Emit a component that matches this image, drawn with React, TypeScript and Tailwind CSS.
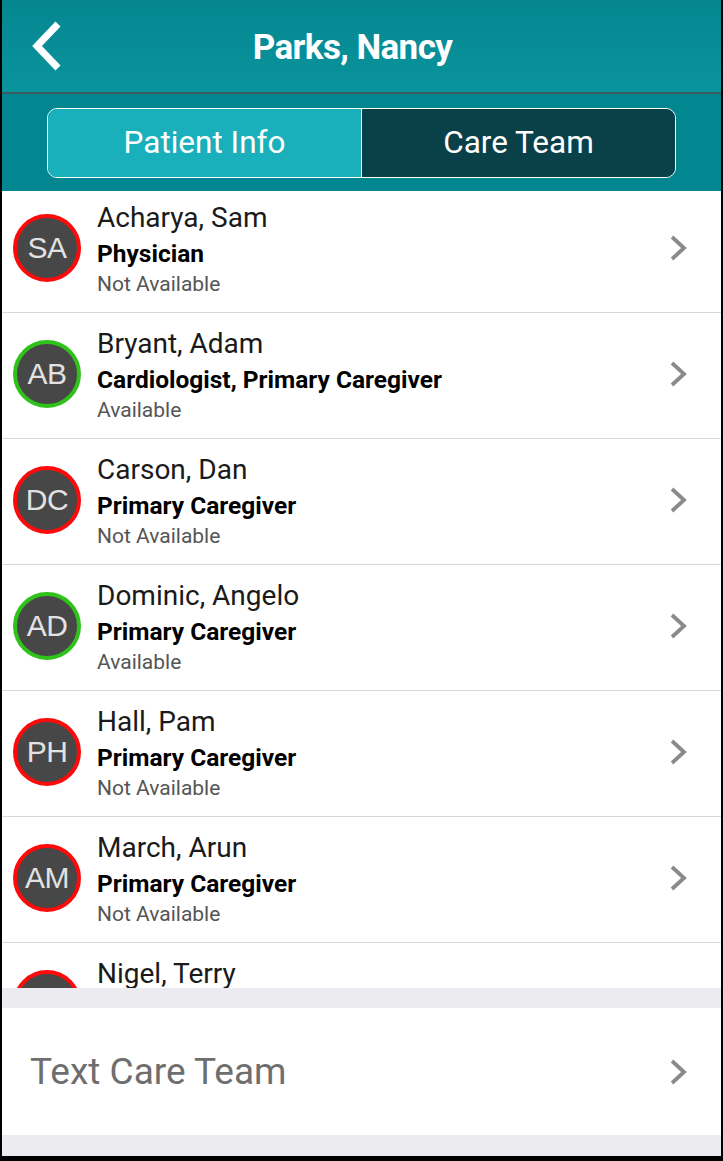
import React from "react";

const people = [
  { initials: "SA", name: "Acharya, Sam", role: "Physician", available: false },
  { initials: "AB", name: "Bryant, Adam", role: "Cardiologist, Primary Caregiver", available: true },
  { initials: "DC", name: "Carson, Dan", role: "Primary Caregiver", available: false },
  { initials: "AD", name: "Dominic, Angelo", role: "Primary Caregiver", available: true },
  { initials: "PH", name: "Hall, Pam", role: "Primary Caregiver", available: false },
  { initials: "AM", name: "March, Arun", role: "Primary Caregiver", available: false },
  { initials: "NT", name: "Nigel, Terry", role: "Primary Caregiver", available: false },
];

function Chevron() {
  return (
    <svg width="18" height="26" viewBox="0 0 18 26" className="shrink-0">
      <polyline points="3,2 15,13 3,24" fill="none" stroke="#8a8a8a" strokeWidth="3.8" strokeLinecap="butt" strokeLinejoin="miter" />
    </svg>
  );
}

function Avatar({ initials, available }: { initials: string; available: boolean }) {
  return (
    <div
      className={`w-[68px] h-[68px] rounded-full border-[4px] bg-[#474747] flex items-center justify-center shrink-0 ${
        available ? "border-[#2fc21a]" : "border-[#ff0a0a]"
      }`}
    >
      <span className="text-[30px] leading-none text-[#e2e2e2] tracking-[-0.5px]" style={{ fontFamily: "'Liberation Sans', Arial, sans-serif" }}>
        {initials}
      </span>
    </div>
  );
}

export default function App() {
  return (
    <div className="w-[723px] h-[1161px] bg-black pl-[2px] pr-[2px] pb-[5px]" style={{ fontFamily: "Roboto, 'Noto Sans', sans-serif" }}>
      <div className="h-full bg-white flex flex-col overflow-hidden">
        {/* Header */}
        <div className="h-[92px] bg-gradient-to-b from-[#05868f] to-[#0a949d] flex items-center relative shrink-0">
          <div className="absolute left-[23px] top-[21px]">
            <svg width="38" height="50" viewBox="0 0 38 50">
              <polyline points="33,3 12,25 33,47" fill="none" stroke="#ffffff" strokeWidth="7" strokeLinecap="butt" strokeLinejoin="miter" />
            </svg>
          </div>
          <div className="flex-1 text-center text-white font-bold text-[35px] tracking-[-0.6px] leading-none pt-[2px] pr-[18px]">Parks, Nancy</div>
        </div>
        <div className="h-[2px] bg-[#3b5c60] shrink-0" />
        {/* Segmented */}
        <div className="h-[97px] bg-[#02868f] shrink-0 flex items-start pt-[14px] px-[45px]">
          <div className="flex w-full h-[70px] rounded-[10px] border-[1.5px] border-white overflow-hidden">
            <div className="flex-1 bg-[#19b0bc] flex items-center justify-center text-white text-[31.5px] leading-none border-r-[1.5px] border-white">
              Patient Info
            </div>
            <div className="flex-1 bg-[#0a4047] flex items-center justify-center text-white text-[31.5px] leading-none">
              Care Team
            </div>
          </div>
        </div>
        {/* List */}
        <div className="h-[797px] overflow-hidden shrink-0 bg-white">
          {people.map((p, i) => (
            <div
              key={p.name}
              className={`flex items-center pr-[34px] border-b border-[#d6d9dd] ${i === 0 ? "h-[122px] pb-[4px]" : "h-[126px]"}`}
            >
              <div className="pl-[11px] pr-[16px] mb-[4px]">
                <Avatar initials={p.initials} available={p.available} />
              </div>
              <div className="flex-1 flex flex-col">
                <div className="text-[28px] leading-[32px] text-[#1a1a1a]">{p.name}</div>
                <div className="text-[24.5px] leading-[30px] font-bold text-black mt-[5px]">{p.role}</div>
                <div className="text-[21px] leading-[26px] text-[#555555] mt-[2px]">{p.available ? "Available" : "Not Available"}</div>
              </div>
              <div className="mb-[4px]">
                <Chevron />
              </div>
            </div>
          ))}
        </div>
        <div className="h-[20px] bg-[#ebebf0] shrink-0" />
        <div className="h-[127px] bg-white flex items-center pl-[28px] pr-[34px] shrink-0">
          <div className="flex-1 text-[37px] text-[#6e6e6e] leading-none">Text Care Team</div>
          <Chevron />
        </div>
        <div className="flex-1 bg-[#ebebf0]" />
      </div>
    </div>
  );
}
